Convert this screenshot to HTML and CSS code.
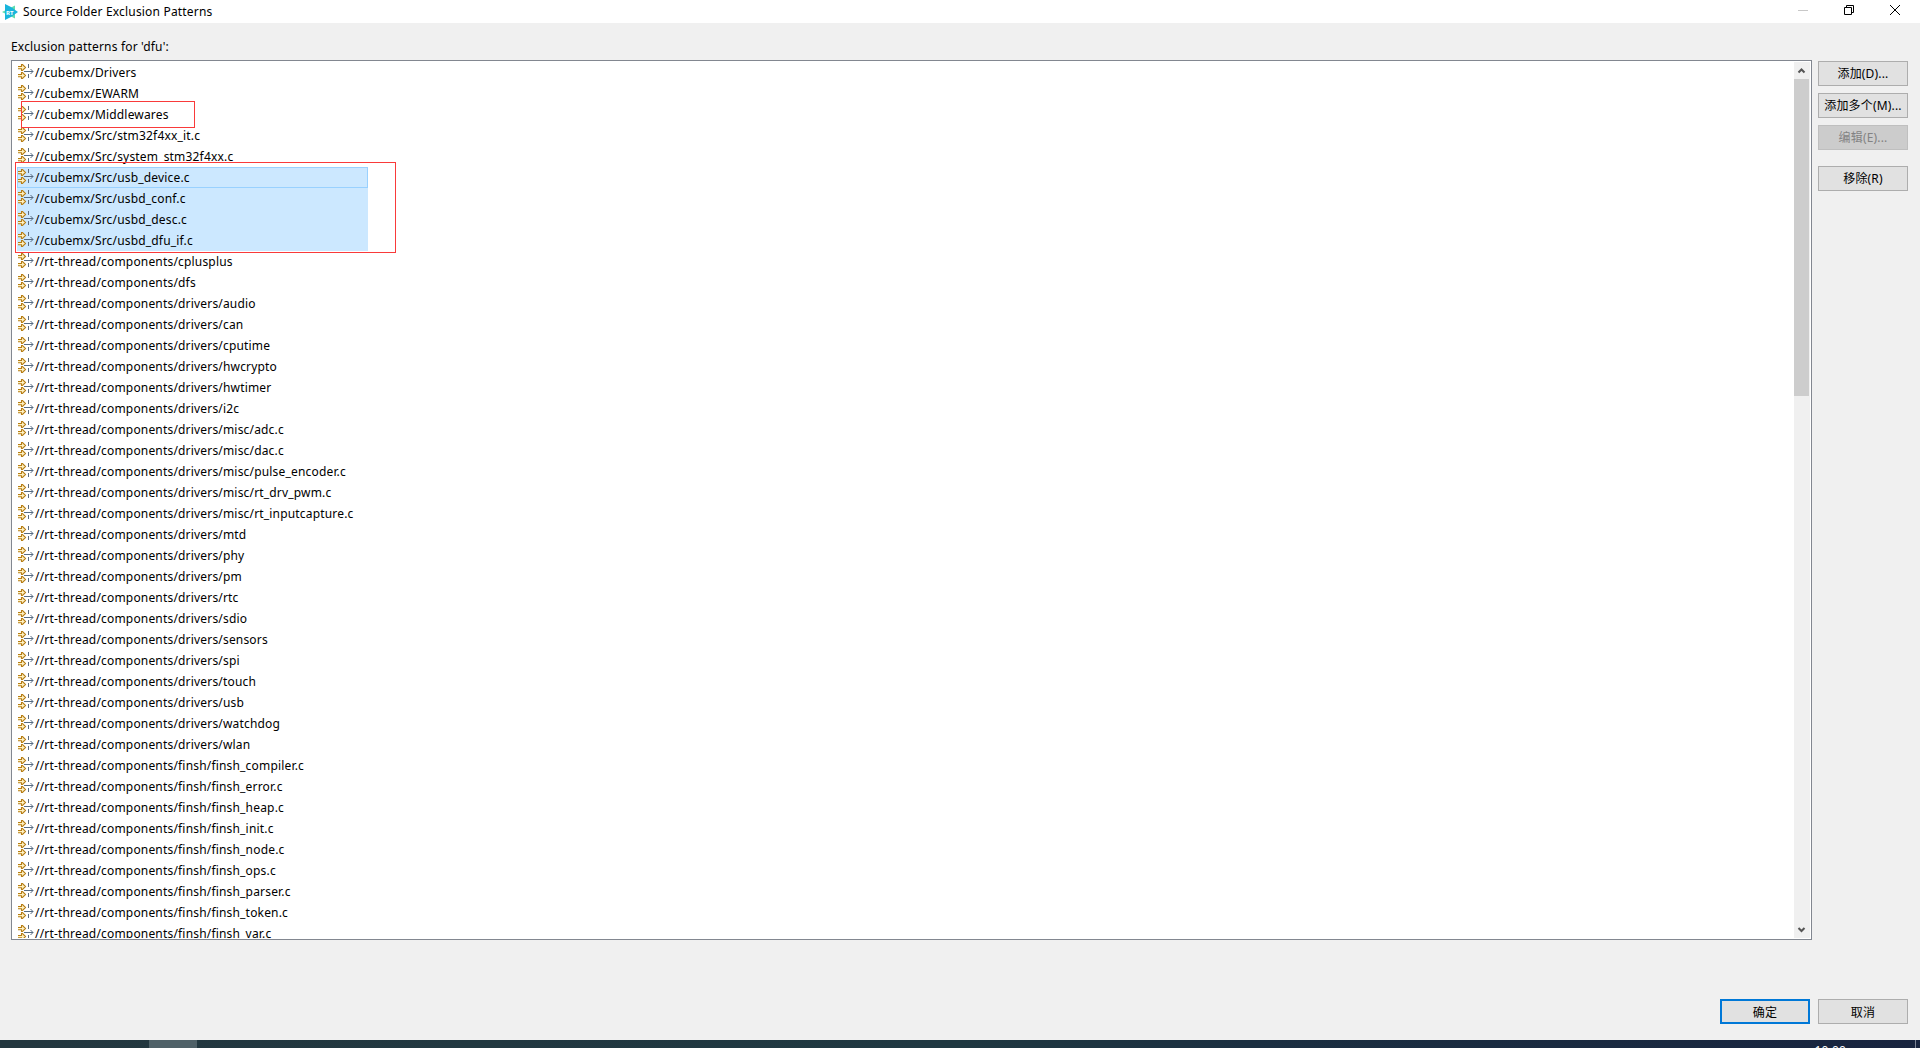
FILE: index.html
```html
<!DOCTYPE html>
<html lang="zh-CN">
<head>
    <meta charset="UTF-8">
    <meta name="viewport" content="width=device-width, initial-scale=1.0">
    <title>Source Folder Exclusion Patterns</title>
    <link rel="stylesheet" href="styles.css">
</head>
<body>

    <!-- Shared row icon -->
    <svg width="0" height="0" class="defs">
        <symbol id="pattern" viewBox="0 0 16 16">
            <g fill="#fff2c4" stroke="#b67d14" stroke-width="1.1">
                <path d="M0 2.5H3.5V0.5H4.5L7.5 3.5L4.5 6.5H3.5V4.7H0"/>
                <path d="M0 10.5H3.5V8.5H4.5L7.5 11.5L4.5 14.5H3.5V12.7H0"/>
            </g>
            <path d="M10.5 0V5M10.5 10V15" fill="none" stroke="#5c6c80" stroke-dasharray="4 1"/>
            <path d="M6 7.5H15M12.5 5L15 7.5L12.5 10" fill="none" stroke="#566b82"/>
        </symbol>
    </svg>

    <header class="titlebar">
        <svg class="logo" width="16" height="16" viewBox="0 0 16 16">
            <path d="M13 1.500V14.500L0 8Z" fill="#5fdcae"/>
            <path d="M3 0L9 3L16 8L9 13L3 16Z" fill="#19b5dc"/>
            <text x="4" y="10.500">RT</text>
        </svg>
        <span class="title">Source Folder Exclusion Patterns</span>
        <div class="controls">
            <svg width="10" height="10" viewBox="0 0 10 10"><path d="M0 5.500H10" stroke="#c8c8c8"/></svg>
            <svg width="10" height="10" viewBox="0 0 10 10"><path d="M0.500 2.500H7.500V9.500H0.500ZM2.500 2.500V0.500H9.500V7.500H7.500" fill="none" stroke="#000"/></svg>
            <svg width="10" height="10" viewBox="0 0 10 10"><path d="M0 0L10 10M10 0L0 10" stroke="#000"/></svg>
        </div>
    </header>

    <main class="dialog">
        <label class="caption">Exclusion patterns for 'dfu':</label>

        <div class="content">
            <div class="listbox">
                <ul class="rows" id="rows"></ul>
                <div class="scrollbar">
                    <svg class="arrow" width="16" height="17" viewBox="0 0 16 17"><path d="M4.500 10.500L7.500 7.500L10.500 10.500" fill="none" stroke="#555" stroke-width="2"/></svg>
                    <div class="thumb"></div>
                    <svg class="arrow bottom" width="16" height="17" viewBox="0 0 16 17"><path d="M4.500 7L7.500 10L10.500 7" fill="none" stroke="#555" stroke-width="2"/></svg>
                </div>
                <div class="mark mark-middlewares"></div>
                <div class="mark mark-usb"></div>
            </div>

            <div class="side">
                <button>添加(D)...</button>
                <button>添加多个(M)...</button>
                <button disabled>编辑(E)...</button>
                <button class="remove">移除(R)</button>
            </div>
        </div>

        <footer class="actions">
            <button class="default">确定</button>
            <button>取消</button>
        </footer>
    </main>

    <div class="taskbar">
        <div class="task"></div>
        <div class="clock">10:00</div>
        <div class="peek"></div>
    </div>

    <script>
        const drivers = ['audio', 'can', 'cputime', 'hwcrypto', 'hwtimer', 'i2c', 'misc/adc.c', 'misc/dac.c',
            'misc/pulse_encoder.c', 'misc/rt_drv_pwm.c', 'misc/rt_inputcapture.c', 'mtd', 'phy', 'pm', 'rtc',
            'sdio', 'sensors', 'spi', 'touch', 'usb', 'watchdog', 'wlan'];
        const finsh = ['compiler', 'error', 'heap', 'init', 'node', 'ops', 'parser', 'token', 'var'];

        const patterns = [
            '//cubemx/Drivers',
            '//cubemx/EWARM',
            '//cubemx/Middlewares',
            '//cubemx/Src/stm32f4xx_it.c',
            '//cubemx/Src/system_stm32f4xx.c',
            '//cubemx/Src/usb_device.c',
            '//cubemx/Src/usbd_conf.c',
            '//cubemx/Src/usbd_desc.c',
            '//cubemx/Src/usbd_dfu_if.c',
            '//rt-thread/components/cplusplus',
            '//rt-thread/components/dfs',
            ...drivers.map(name => '//rt-thread/components/drivers/' + name),
            ...finsh.map(name => '//rt-thread/components/finsh/finsh_' + name + '.c')
        ];

        // Rows 5 to 8 are selected, the first of them has the focus
        document.getElementById('rows').innerHTML = patterns.map((text, i) => {
            const state = i === 5 ? 'selected focused' : i > 5 && i < 9 ? 'selected' : '';
            return `<li class="${state}"><svg width="16" height="16"><use href="#pattern"/></svg><span>${text}</span></li>`;
        }).join('');
    </script>

</body>
</html>
```
FILE: styles.css
```css
* {
    box-sizing: border-box;
}

body {
    margin: 0;
    height: 100vh;
    display: flex;
    flex-direction: column;
    overflow: hidden;
    background: #f0f0f0;
    color: #000;
    font-family: "Noto Sans", "Noto Sans CJK SC", sans-serif;
    font-size: 12px;
    letter-spacing: 0.18px;
}

.defs {
    position: absolute;
}

/* Title bar */
.titlebar {
    display: flex;
    align-items: center;
    flex: none;
    height: 23px;
    padding-left: 2px;
    background: #fff;
}

.logo text {
    font-size: 6px;
    font-weight: bold;
    letter-spacing: 0;
    fill: #fff;
}

.title {
    margin-left: 5px;
}

.controls {
    display: flex;
    gap: 36px;
    margin: -3px 20px 0 auto;
}

/* Dialog */
.dialog {
    flex: 1;
    display: flex;
    flex-direction: column;
    padding: 15px 12px 16px 11px;
}

.caption {
    height: 22px;
    line-height: 17px;
}

.content {
    display: flex;
    gap: 6px;
}

.listbox {
    position: relative;
    display: flex;
    width: 1801px;
    height: 880px;
    padding: 1px;
    border: 1px solid #828790;
    background: #fff;
}

.rows {
    flex: 1;
    height: 876px;
    margin: 0;
    padding: 0 0 0 4px;
    overflow: hidden;
    list-style: none;
}

.rows li {
    display: flex;
    width: 351px;
    height: 21px;
    padding-left: 1px;
    line-height: 21px;
    white-space: nowrap;
}

.rows svg {
    flex: none;
    margin-top: 2px;
}

.rows li span {
    margin-left: 1px;
}

.rows .selected {
    background: #cce8ff;
}

.rows .focused {
    box-shadow: inset 0 0 0 1px #99d1ff;
}

.scrollbar {
    display: flex;
    flex-direction: column;
    width: 16px;
    background: #f0f0f0;
}

.arrow {
    flex: none;
}

.arrow.bottom {
    margin-top: auto;
}

.thumb {
    width: 15px;
    height: 317px;
    background: #cdcdcd;
}

/* Red boxes drawn over the list */
.mark {
    position: absolute;
    border: 1px solid #f93a3a;
}

.mark-middlewares {
    left: 9px;
    top: 40px;
    width: 174px;
    height: 27px;
}

.mark-usb {
    left: 3px;
    top: 101px;
    width: 381px;
    height: 91px;
}

/* Buttons */
.side {
    display: flex;
    flex-direction: column;
    gap: 7px;
    padding-top: 1px;
}

button {
    width: 90px;
    height: 25px;
    padding: 0 0 1px;
    border: 1px solid #adadad;
    background: #e1e1e1;
    color: #000;
    font: inherit;
    letter-spacing: inherit;
    white-space: nowrap;
}

button:disabled {
    border-color: #bfbfbf;
    background: #ccc;
    color: #838383;
}

button.default {
    border: 2px solid #0078d7;
}

.remove {
    margin-top: 9px;
}

.actions {
    display: flex;
    justify-content: flex-end;
    gap: 8px;
    margin-top: auto;
}

.actions button {
    padding: 0;
}

/* Taskbar */
.taskbar {
    display: flex;
    flex: none;
    height: 8px;
    overflow: hidden;
    background: linear-gradient(to right, #23373f, #1f3841 50%, #1b2f41 65%, #18243f);
}

.task {
    width: 48px;
    margin-left: 149px;
    background: #4f6168;
}

.clock {
    margin-left: auto;
    padding-top: 4px;
    color: #fff;
    line-height: 14px;
}

.peek {
    width: 5px;
    margin-left: 69px;
    border-left: 1px solid #7c8496;
}
```
